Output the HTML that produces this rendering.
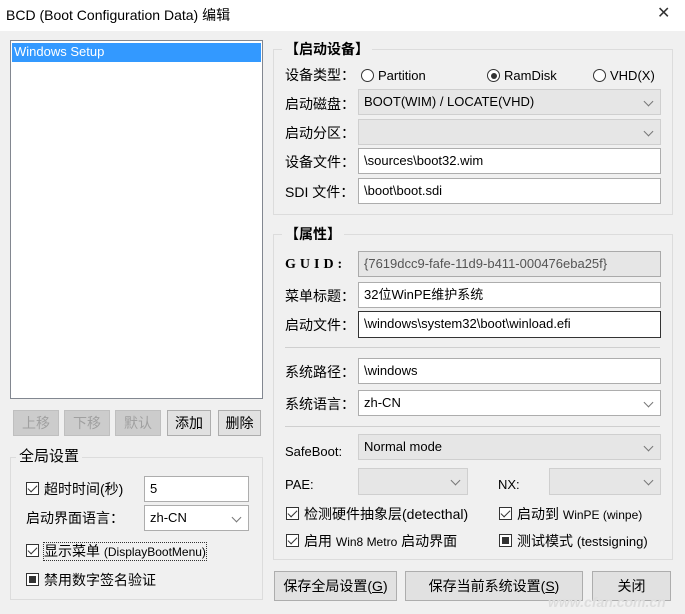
<!DOCTYPE html><html><head><meta charset="utf-8"><style>
body{margin:0;width:685px;height:614px;background:#f0f0f0;position:relative;overflow:hidden;font-family:"Liberation Sans","Noto Sans CJK SC",sans-serif;font-size:13px;color:#000}
div,span{position:absolute;box-sizing:border-box}
.t{white-space:nowrap;line-height:16px}
.cn{font-size:14px}
.box{background:#fff;border:1px solid #adadad;padding:3px 5px;white-space:nowrap;line-height:18px}
.dis{background:#e6e6e6;border:1px solid #cfcfcf}
.sel::after{content:"";position:absolute;right:8px;top:8px;width:6px;height:6px;border-right:1px solid #777;border-bottom:1px solid #777;transform:rotate(45deg)}
.btn{background:#e1e1e1;border:1px solid #adadad;text-align:center;line-height:24px;font-size:14px}
.bd{color:#a0a0a0;background:#cccccc;border-color:#bfbfbf}
.grp{border:1px solid #dcdcdc}
.cb{width:13px;height:13px;border:1px solid #333;background:#fff}
.cb.c::after{content:"";position:absolute;left:3px;top:0px;width:4px;height:8px;border-right:1.5px solid #333;border-bottom:1.5px solid #333;transform:rotate(45deg)}
.cb.f::after{content:"";position:absolute;left:2px;top:2px;width:7px;height:7px;background:#333}
.rd{width:13px;height:13px;border:1px solid #333;border-radius:50%;background:#fff}
.rd.on::after{content:"";position:absolute;left:2.5px;top:2.5px;width:6px;height:6px;border-radius:50%;background:#333}
.sep{height:1px;background:#cfcfcf}
</style></head><body>
<div style="left:0;top:0;width:685px;height:31px;background:#fff"></div>
<div class="t" style="left:6px;top:7px;font-size:14px">BCD (Boot Configuration Data) 编辑</div>
<div class="t" style="left:657px;top:6px;font-size:16px;color:#333">✕</div>

<div style="left:10px;top:40px;width:253px;height:359px;background:#fff;border:1px solid #828790"></div>
<div style="left:12px;top:43px;width:249px;height:19px;background:#3399ff"></div>
<div class="t" style="left:14px;top:44px;color:#fff">Windows Setup</div>

<div class="btn bd" style="left:13px;top:410px;width:46px;height:26px">上移</div>
<div class="btn bd" style="left:64px;top:410px;width:46px;height:26px">下移</div>
<div class="btn bd" style="left:115px;top:410px;width:46px;height:26px">默认</div>
<div class="btn" style="left:167px;top:410px;width:44px;height:26px">添加</div>
<div class="btn" style="left:218px;top:410px;width:43px;height:26px">删除</div>

<div class="grp" style="left:10px;top:457px;width:253px;height:143px"></div>
<div class="t cn" style="left:16px;top:449px;background:#f0f0f0;padding:0 3px;font-size:15px">全局设置</div>
<div class="cb c" style="left:26px;top:482px"></div>
<div class="t cn" style="left:44px;top:481px">超时时间(秒)</div>
<div class="box" style="left:144px;top:476px;width:105px;height:26px">5</div>
<div class="t cn" style="left:26px;top:510px">启动界面语言：</div>
<div class="box sel" style="left:144px;top:505px;width:105px;height:26px">zh-CN</div>
<div class="cb c" style="left:26px;top:544px"></div>
<div class="t cn" style="left:44px;top:543px;outline:1px dotted #333">显示菜单 <span style="position:static;font-size:12px">(DisplayBootMenu)</span></div>
<div class="cb f" style="left:26px;top:573px"></div>
<div class="t cn" style="left:44px;top:572px">禁用数字签名验证</div>

<div class="grp" style="left:273px;top:49px;width:400px;height:166px"></div>
<div class="t cn" style="left:282px;top:41px;background:#f0f0f0;padding:0 3px;font-weight:bold">【启动设备】</div>
<div class="t cn" style="left:285px;top:67px">设备类型：</div>
<div class="rd" style="left:361px;top:69px"></div><div class="t" style="left:378px;top:68px">Partition</div>
<div class="rd on" style="left:487px;top:69px"></div><div class="t" style="left:504px;top:68px">RamDisk</div>
<div class="rd" style="left:593px;top:69px"></div><div class="t" style="left:610px;top:68px">VHD(X)</div>
<div class="t cn" style="left:285px;top:96px">启动磁盘：</div>
<div class="box dis sel" style="left:358px;top:89px;width:303px;height:26px">BOOT(WIM) / LOCATE(VHD)</div>
<div class="t cn" style="left:285px;top:125px">启动分区：</div>
<div class="box dis sel" style="left:358px;top:119px;width:303px;height:26px"></div>
<div class="t cn" style="left:285px;top:154px">设备文件：</div>
<div class="box" style="left:358px;top:148px;width:303px;height:26px">\sources\boot32.wim</div>
<div class="t cn" style="left:285px;top:184px">SDI 文件：</div>
<div class="box" style="left:358px;top:178px;width:303px;height:26px">\boot\boot.sdi</div>

<div class="grp" style="left:273px;top:234px;width:400px;height:326px"></div>
<div class="t cn" style="left:282px;top:226px;background:#f0f0f0;padding:0 3px;font-weight:bold">【属性】</div>
<div class="t" style="left:285px;top:257px;font-family:'Liberation Serif',serif;font-weight:bold;font-size:14px;letter-spacing:4px">GUID:</div>
<div class="box dis" style="left:358px;top:251px;width:303px;height:26px;color:#555;border-color:#aaa">{7619dcc9-fafe-11d9-b411-000476eba25f}</div>
<div class="t cn" style="left:285px;top:288px">菜单标题：</div>
<div class="box" style="left:358px;top:282px;width:303px;height:26px">32位WinPE维护系统</div>
<div class="t cn" style="left:285px;top:317px">启动文件：</div>
<div class="box" style="left:358px;top:311px;width:303px;height:27px;border-color:#333">\windows\system32\boot\winload.efi</div>
<div class="sep" style="left:285px;top:347px;width:375px"></div>
<div class="t cn" style="left:285px;top:364px">系统路径：</div>
<div class="box" style="left:358px;top:358px;width:303px;height:26px">\windows</div>
<div class="t cn" style="left:285px;top:396px">系统语言：</div>
<div class="box sel" style="left:358px;top:390px;width:303px;height:26px">zh-CN</div>
<div class="sep" style="left:285px;top:426px;width:375px"></div>
<div class="t" style="left:285px;top:444px">SafeBoot:</div>
<div class="box dis sel" style="left:358px;top:434px;width:303px;height:26px">Normal mode</div>
<div class="t" style="left:285px;top:477px">PAE:</div>
<div class="box dis sel" style="left:358px;top:468px;width:110px;height:27px"></div>
<div class="t" style="left:498px;top:477px">NX:</div>
<div class="box dis sel" style="left:549px;top:468px;width:112px;height:27px"></div>
<div class="cb c" style="left:286px;top:507px"></div>
<div class="t cn" style="left:304px;top:506px">检测硬件抽象层(detecthal)</div>
<div class="cb c" style="left:499px;top:507px"></div>
<div class="t cn" style="left:517px;top:506px">启动到 <span style="position:static;font-size:12px">WinPE (winpe)</span></div>
<div class="cb c" style="left:286px;top:534px"></div>
<div class="t cn" style="left:304px;top:533px">启用 <span style="position:static;font-size:12px">Win8 Metro</span> 启动界面</div>
<div class="cb f" style="left:499px;top:534px"></div>
<div class="t cn" style="left:517px;top:533px">测试模式 <span style="position:static;font-size:13px">(testsigning)</span></div>

<div class="btn" style="left:274px;top:571px;width:123px;height:30px;line-height:28px">保存全局设置(<u>G</u>)</div>
<div class="btn" style="left:405px;top:571px;width:178px;height:30px;line-height:28px">保存当前系统设置(<u>S</u>)</div>
<div class="btn" style="left:592px;top:571px;width:79px;height:30px;line-height:28px">关闭</div>
<div class="t" style="left:548px;top:594px;font-size:14px;font-style:italic;font-weight:bold;color:#ddd">www.cfan.com.cn</div>
</body></html>
